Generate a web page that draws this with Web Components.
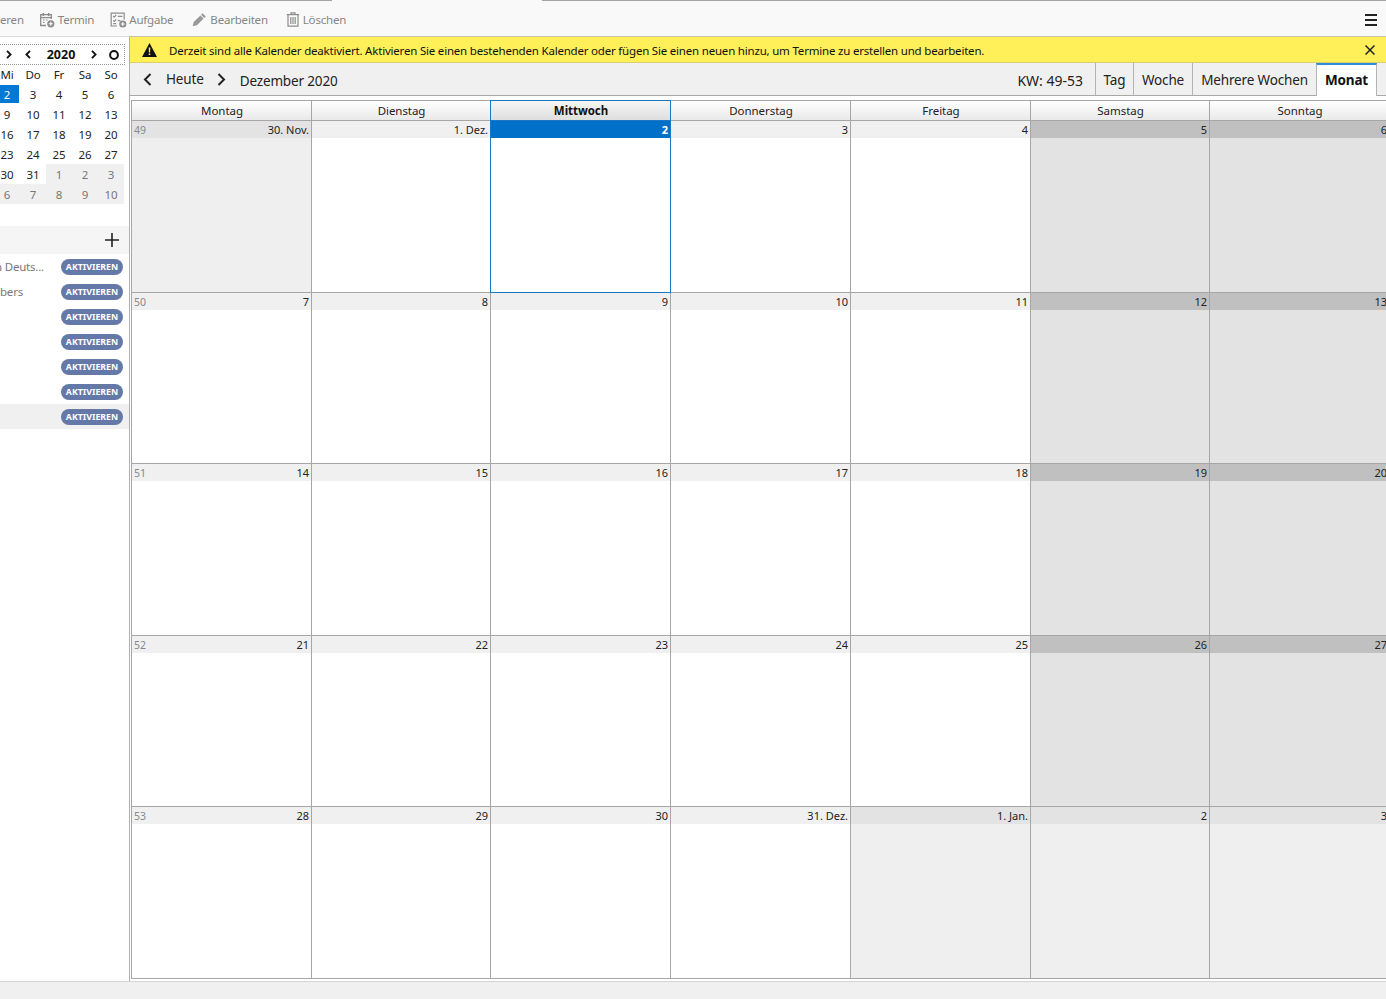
<!DOCTYPE html>
<html lang="de">
<head>
<meta charset="utf-8">
<title>Kalender</title>
<style>
  html, body { margin: 0; height: 100%; overflow: hidden; background: #fff; }
  body { font-family: "Noto Sans", "Open Sans", sans-serif; color: #1a1a1a; }
</style>
</head>
<body>
<cal-app></cal-app>
<script>
const ICONS = {
  termin: `<svg width="16" height="16" viewBox="0 0 16 16" fill="none" stroke="#8c8c8c" stroke-width="1.3"><path d="M7 13.5H1.7V2.7h10.6V7"/><path d="M1.7 5.6h10.6"/><path d="M4.3 1v3M9.7 1v3" stroke-width="1.6"/><path d="M4 8h1.6M7 8h1.6M4 10.5h1.6" stroke-width="1.2"/><circle cx="11.8" cy="11.8" r="3.6" fill="#8c8c8c" stroke="none"/><path d="M11.8 9.8v4M9.8 11.8h4" stroke="#fff" stroke-width="1.1"/></svg>`,
  aufgabe: `<svg width="17" height="16" viewBox="0 0 17 16" fill="none" stroke="#8c8c8c" stroke-width="1.2"><path d="M7 14H1.2V1.2h13V7.5"/><path d="M3.2 4l1.1 1.1L6.2 3M3.2 8.4l1.1 1.1 1.9-2.1"/><path d="M7.8 4.4h4.6M7.8 8.6h2.6M3.2 11.6h3"/><circle cx="12.8" cy="12" r="3.6" fill="#8c8c8c" stroke="none"/><path d="M12.8 10v4M10.8 12h4" stroke="#fff" stroke-width="1.1"/></svg>`,
  pencil: `<svg width="15" height="15" viewBox="0 0 15 15" fill="#999"><path d="M10.6 1.2l3.2 3.2-1.5 1.5-3.2-3.2zM8.4 3.4l3.2 3.2-6.7 6.7-4.2 1 1-4.2z"/></svg>`,
  trash: `<svg width="14" height="15" viewBox="0 0 14 15" fill="none" stroke="#8c8c8c" stroke-width="1.2"><path d="M.8 2.6h12.4"/><path d="M5 2.4V.8h4v1.6"/><path d="M2 2.8v11.4h10V2.8"/><path d="M4.8 5v7M7 5v7M9.2 5v7"/></svg>`,
  burger: `<svg width="12" height="12" viewBox="0 0 12 12" stroke="#222" stroke-width="2"><path d="M0 1h12M0 6h12M0 11h12"/></svg>`,
  warn: `<svg width="15" height="14" viewBox="0 0 15 14"><path d="M7.5 0L15 14H0z" fill="#111"/><path d="M6.7 4.4h1.6l-.2 5H6.9zM6.7 10.4h1.6V12H6.7z" fill="#fff05a"/></svg>`,
  close: `<svg width="10" height="10" viewBox="0 0 10 10" stroke="#222" stroke-width="1.5"><path d="M.5.5l9 9M9.5.5l-9 9"/></svg>`,
  left: `<svg width="9" height="13" viewBox="0 0 9 13" fill="none" stroke="#222" stroke-width="2"><path d="M7.5 1L2 6.5 7.5 12"/></svg>`,
  right: `<svg width="9" height="13" viewBox="0 0 9 13" fill="none" stroke="#222" stroke-width="2"><path d="M1.5 1L7 6.5 1.5 12"/></svg>`,
  miniLeft: `<svg width="6" height="9" viewBox="0 0 6 9" fill="none" stroke="#111" stroke-width="1.8"><path d="M5 .8L1.4 4.5 5 8.2"/></svg>`,
  miniRight: `<svg width="6" height="9" viewBox="0 0 6 9" fill="none" stroke="#111" stroke-width="1.8"><path d="M1 .8l3.6 3.7L1 8.2"/></svg>`,
  ring: `<svg width="10" height="10" viewBox="0 0 10 10" fill="none" stroke="#111" stroke-width="2"><circle cx="5" cy="5" r="3.9"/></svg>`,
  plus: `<svg width="14" height="14" viewBox="0 0 14 14" stroke="#222" stroke-width="1.6"><path d="M7 0v14M0 7h14"/></svg>`
};

class CalToolbar extends HTMLElement {
  constructor() {
    super();
    const items = [
      ["", "eren", 0, 2],
      ["termin", "Termin", 15, 3],
      ["aufgabe", "Aufgabe", 16, 2],
      ["pencil", "Bearbeiten", 19, 3],
      ["trash", "Löschen", 18, 3]
    ];
    this.attachShadow({ mode: "open" }).innerHTML = `
      <style>
        :host { display: flex; flex-direction: column; height: 36px; background: #f9f9f9; flex: none; }
        .strip { display: flex; height: 1px; flex: none; }
        .strip i { background: #a3a3a3; }
        .strip i:first-child { width: 332px; }
        .strip b { width: 210px; }
        .strip i:last-child { flex: 1; }
        .bar { flex: 1; display: flex; align-items: center; padding-top: 2px; }
        .item { display: flex; align-items: center; color: #858585; font-size: 11.5px; letter-spacing: -0.2px; white-space: nowrap; }
        .burger { margin-left: auto; margin-right: 9px; display: flex; }
        svg { display: block; }
      </style>
      <div class="strip"><i></i><b></b><i></i></div>
      <div class="bar">
        ${items.map(([icon, text, gap, inner]) => `<span class="item" style="margin-left:${gap}px;gap:${inner}px">${icon ? ICONS[icon] : ""}<span>${text}</span></span>`).join("")}
        <span class="burger">${ICONS.burger}</span>
      </div>`;
  }
}
customElements.define("cal-toolbar", CalToolbar);

class MiniMonth extends HTMLElement {
  constructor() {
    super();
    const days = [
      ["2", "sel"], ["3"], ["4"], ["5"], ["6"],
      ["9"], ["10"], ["11"], ["12"], ["13"],
      ["16"], ["17"], ["18"], ["19"], ["20"],
      ["23"], ["24"], ["25"], ["26"], ["27"],
      ["30"], ["31"], ["1", "other"], ["2", "other"], ["3", "other"],
      ["6", "other"], ["7", "other"], ["8", "other"], ["9", "other"], ["10", "other"]
    ];
    this.attachShadow({ mode: "open" }).innerHTML = `
      <style>
        :host { display: block; flex: none; width: 150px; align-self: flex-end; padding: 7px 4px 0 0; box-sizing: border-box; font-size: 11.5px; letter-spacing: -0.1px; }
        .head { display: flex; align-items: center; height: 19px; border-top: 1px dotted #999; border-bottom: 1px dotted #999; border-right: 1px dotted #999; font-weight: 700; color: #111; }
        .head svg { display: block; flex: none; }
        .year { width: 60px; text-align: center; font-size: 12.5px; letter-spacing: 0; }
        .grid { display: grid; grid-template-columns: repeat(5, 26px); grid-auto-rows: 20px; justify-content: end; padding-right: 1px; margin-top: -1px; }
        .grid span { display: flex; align-items: center; justify-content: center; color: #222; }
        .dow { color: #333; }
        .sel { background: #0078d4; color: #fff !important; clip-path: inset(1px 1px 1px 0); }
        .other { background: #f0f0f0; color: #777 !important; }
      </style>
      <div class="head">
        <span style="width:27px"></span>${ICONS.miniRight}
        <span style="width:13px"></span>${ICONS.miniLeft}
        <span class="year">2020</span>
        ${ICONS.miniRight}
        <span style="width:12px"></span>${ICONS.ring}
      </div>
      <div class="grid">
        ${["Mi", "Do", "Fr", "Sa", "So"].map((d) => `<span class="dow">${d}</span>`).join("")}
        ${days.map(([d, c]) => `<span class="${c || ""}">${d}</span>`).join("")}
      </div>`;
  }
}
customElements.define("mini-month", MiniMonth);

class CalListRow extends HTMLElement {
  constructor() {
    super();
    this.attachShadow({ mode: "open" }).innerHTML = `
      <style>
        :host { display: flex; align-items: center; height: 25px; font-size: 11.5px; letter-spacing: -0.2px; color: #777; white-space: nowrap; }
        :host([active]) { background: #f0f0f0; }
        .name { flex: 1; min-width: 0; overflow: hidden; }
        .pill { flex: none; box-sizing: border-box; width: 62px; height: 16px; margin-right: 6px; border-radius: 8px; background: #6579a8; color: #fff; font-size: 8.8px; letter-spacing: 0; font-weight: 700; display: flex; align-items: center; justify-content: center; }
      </style>
      <span class="name"><slot></slot></span>
      <span class="pill">AKTIVIEREN</span>`;
  }
}
customElements.define("cal-list-row", CalListRow);

class CalSidebar extends HTMLElement {
  constructor() {
    super();
    this.attachShadow({ mode: "open" }).innerHTML = `
      <style>
        :host { display: flex; flex-direction: column; width: 129px; flex: none; border-top: 1px solid #dcdcdc; border-right: 1px solid #b0b0b0; overflow: hidden; }
        .add { margin-top: 22px; height: 28px; flex: none; background: #f5f5f5; display: flex; align-items: center; justify-content: flex-end; padding-right: 10px; }
        .add svg { display: block; }
        .clip { display: block; margin-left: -5px; }
      </style>
      <mini-month></mini-month>
      <div class="add">${ICONS.plus}</div>
      <div class="list">
        <cal-list-row><span class="clip">n Deuts...</span></cal-list-row>
        <cal-list-row>bers</cal-list-row>
        <cal-list-row></cal-list-row>
        <cal-list-row></cal-list-row>
        <cal-list-row></cal-list-row>
        <cal-list-row></cal-list-row>
        <cal-list-row active></cal-list-row>
      </div>`;
  }
}
customElements.define("cal-sidebar", CalSidebar);

class CalNotice extends HTMLElement {
  constructor() {
    super();
    this.attachShadow({ mode: "open" }).innerHTML = `
      <style>
        :host { display: flex; align-items: center; flex: none; height: 27px; box-sizing: border-box; background: #fff05a; border-top: 1px solid #c6c3a0; border-bottom: 1px solid #d8d070; font-size: 11.5px; letter-spacing: -0.2px; color: #111; padding-left: 12px; white-space: nowrap; }
        .text { margin-left: 12px; padding-top: 2px; }
        .close { margin-left: auto; margin-right: 11px; display: flex; }
        svg { display: block; }
      </style>
      ${ICONS.warn}
      <span class="text"><slot></slot></span>
      <span class="close">${ICONS.close}</span>`;
  }
}
customElements.define("cal-notice", CalNotice);

class CalNav extends HTMLElement {
  constructor() {
    super();
    this.attachShadow({ mode: "open" }).innerHTML = `
      <style>
        :host { display: flex; align-items: stretch; flex: none; height: 33px; box-sizing: border-box; background: #f0f0f0; border-bottom: 1px solid #a8a8a8; color: #222; white-space: nowrap; font-size: 13.5px; letter-spacing: -0.15px; }
        .left { display: flex; align-items: center; flex: 1; padding-left: 13px; }
        .today { margin: 0 13px 0 14px; }
        .month { margin-left: 14px; padding-top: 3px; }
        .kw { align-self: center; margin-right: 12px; padding-top: 2px; font-size: 14px; letter-spacing: 0; }
        .tab { display: flex; align-items: center; justify-content: center; border-left: 1px solid #b4b4b4; box-sizing: border-box; padding-top: 1px; }
        .tab.on { width: 61px; background: #fff; border-top: 2px solid #2f8bdc; border-right: 1px solid #b4b4b4; font-weight: 700; margin-bottom: -1px; padding: 0 0 2px; color: #111; }
        .end { width: 9px; }
        svg { display: block; }
      </style>
      <div class="left">${ICONS.left}<span class="today">Heute</span>${ICONS.right}<span class="month">Dezember 2020</span></div>
      <span class="kw">KW: 49-53</span>
      <span class="tab" style="width:38px">Tag</span>
      <span class="tab" style="width:59px">Woche</span>
      <span class="tab" style="width:124px">Mehrere Wochen</span>
      <span class="tab on">Monat</span>
      <span class="end"></span>`;
  }
}
customElements.define("cal-nav", CalNav);

class CalDay extends HTMLElement {
  static get observedAttributes() { return ["label", "week"]; }
  constructor() {
    super();
    this.attachShadow({ mode: "open" }).innerHTML = `
      <style>
        :host { display: flex; flex-direction: column; box-sizing: border-box; min-width: 0; background: #fff; border-right: 1px solid #a6a6a6; border-bottom: 1px solid #a6a6a6; font-size: 11px; color: #222; }
        .head { height: 17px; flex: none; display: flex; align-items: center; justify-content: space-between; padding: 0 2px; background: #f0f0f0; white-space: nowrap; }
        .week { color: #888; font-size: 10.5px; }
        .num { margin-left: auto; }
        :host([kind="weekend"]) { background: #e3e3e3; }
        :host([kind="weekend"]) .head { background: #c0c0c0; }
        :host([kind="other"]) { background: #efefef; }
        :host([kind="other"]) .head { background: #e3e3e3; }
        :host([selected]) { border-right-color: #1b76c4; border-bottom-color: #1b76c4; box-shadow: -1px 0 0 #1b76c4; }
        :host([selected]) .head { background: #0070c8; color: #fff; font-weight: 700; }
      </style>
      <div class="head"><span class="week"></span><span class="num"></span></div>`;
  }
  attributeChangedCallback(name, oldValue, newValue) {
    this.shadowRoot.querySelector(name === "week" ? ".week" : ".num").textContent = newValue;
  }
}
customElements.define("cal-day", CalDay);

class MonthGrid extends HTMLElement {
  constructor() {
    super();
    const names = ["Montag", "Dienstag", "Mittwoch", "Donnerstag", "Freitag", "Samstag", "Sonntag"];
    const rows = [
      ["30. Nov.", "1. Dez.", "2", "3", "4", "5", "6"],
      ["7", "8", "9", "10", "11", "12", "13"],
      ["14", "15", "16", "17", "18", "19", "20"],
      ["21", "22", "23", "24", "25", "26", "27"],
      ["28", "29", "30", "31. Dez.", "1. Jan.", "2", "3"]
    ];
    let cells = "";
    rows.forEach((row, r) => {
      row.forEach((label, c) => {
        let kind = c > 4 ? "weekend" : "";
        if ((r === 0 && c === 0) || (r === 4 && c > 3)) kind = "other";
        const week = c === 0 ? `week="${49 + r}"` : "";
        const sel = r === 0 && c === 2 ? "selected" : "";
        cells += `<cal-day label="${label}" ${week} kind="${kind}" ${sel}></cal-day>`;
      });
    });
    this.attachShadow({ mode: "open" }).innerHTML = `
      <style>
        :host { display: block; flex: none; margin: 4px 0 0 1px; width: 1258px; border-left: 1px solid #a6a6a6; }
        .grid { display: grid; grid-template-columns: 180px 179px 180px 180px 180px 179px 180px; grid-template-rows: 21px 172px 171px 172px 171px 172px; }
        .name { display: flex; align-items: center; justify-content: center; box-sizing: border-box; font-size: 11.5px; letter-spacing: -0.05px; color: #222; padding-left: 1px; background: linear-gradient(#fff, #e9e9e9); border-top: 1px solid #a6a6a6; border-right: 1px solid #a6a6a6; border-bottom: 1px solid #a6a6a6; }
        .name.sel { font-weight: 700; color: #111; background: linear-gradient(#f6f6f6, #dedede); border-top-color: #1b76c4; border-right-color: #1b76c4; box-shadow: -1px 0 0 #1b76c4; border-bottom-color: #1b76c4; }
      </style>
      <div class="grid">
        ${names.map((n, i) => `<div class="name ${i === 2 ? "sel" : ""}">${n}</div>`).join("")}
        ${cells}
      </div>`;
  }
}
customElements.define("month-grid", MonthGrid);

class CalApp extends HTMLElement {
  constructor() {
    super();
    this.attachShadow({ mode: "open" }).innerHTML = `
      <style>
        :host { display: flex; flex-direction: column; width: 1386px; height: 999px; overflow: hidden; }
        .main { display: flex; flex: none; height: 945px; }
        .content { flex: 1; min-width: 0; display: flex; flex-direction: column; overflow: hidden; }
        .status { flex: 1; background: #f0f0f0; border-top: 1px solid #d4d4d4; }
      </style>
      <cal-toolbar></cal-toolbar>
      <div class="main">
        <cal-sidebar></cal-sidebar>
        <div class="content">
          <cal-notice>Derzeit sind alle Kalender deaktiviert. Aktivieren Sie einen bestehenden Kalender oder fügen Sie einen neuen hinzu, um Termine zu erstellen und bearbeiten.</cal-notice>
          <cal-nav></cal-nav>
          <month-grid></month-grid>
        </div>
      </div>
      <div class="status"></div>`;
  }
}
customElements.define("cal-app", CalApp);
</script>
</body>
</html>
